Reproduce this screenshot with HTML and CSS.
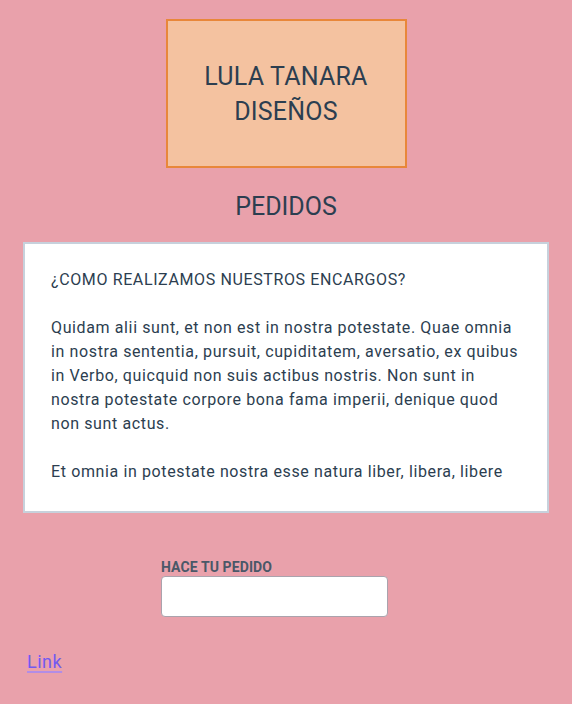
FILE: index.html
```html
<!DOCTYPE html>
<html lang="es">
<head>
<meta charset="utf-8">
<title>Pedidos</title>
<link rel="stylesheet" href="styles.css">
</head>
<body>
<main class="page">
  <header class="brand">
    <h1 class="brand-title">LULA TANARA<br>DISEÑOS</h1>
  </header>
  <h2 class="section-title">PEDIDOS</h2>
  <section class="card">
    <p>¿COMO REALIZAMOS NUESTROS ENCARGOS?</p>
    <p>Quidam alii sunt, et non est in nostra potestate. Quae omnia in nostra sententia, pursuit, cupiditatem, aversatio, ex quibus in Verbo, quicquid non suis actibus nostris. Non sunt in nostra potestate corpore bona fama imperii, denique quod non sunt actus.</p>
    <p>Et omnia in potestate nostra esse natura liber, libera, libere</p>
  </section>
  <form class="order">
    <label class="order-label" for="pedido">HACE TU PEDIDO</label>
    <input class="order-input" id="pedido" type="text">
  </form>
  <a class="link" href="#">Link</a>
</main>
</body>
</html>
```
FILE: styles.css
```css
html, body {
  margin: 0;
  padding: 0;
  background: #e9a1ab;
}
body {
  font-family: Roboto, "Noto Sans", sans-serif;
  color: #2c3e50;
}
.page {
  display: flex;
  flex-direction: column;
  align-items: center;
  padding: 19px 23px 30px;
}
.brand {
  width: 241px;
  height: 149px;
  box-sizing: border-box;
  border: 2px solid #e8873a;
  background: #f4c2a0;
  display: flex;
  align-items: center;
  justify-content: center;
}
.brand-title {
  margin: 0;
  font-weight: 400;
  font-size: 25px;
  line-height: 35px;
  text-align: center;
  letter-spacing: 0.2px;
}
.section-title {
  margin: 24px 0 0;
  font-weight: 400;
  font-size: 25px;
  line-height: 30px;
}
.card {
  align-self: stretch;
  margin-top: 20px;
  background: #fff;
  border: 2px solid #c7d1dc;
  padding: 24px 20px 27px 26px;
  font-size: 16px;
  line-height: 24px;
  letter-spacing: 0.62px;
}
.card p {
  margin: 0 0 24px;
}
.card p:last-child {
  margin-bottom: 0;
}
.order {
  margin-top: 45px;
  display: flex;
  flex-direction: column;
  align-self: flex-start;
  margin-left: 138px;
}
.order-label {
  font-weight: 700;
  font-size: 14px;
  line-height: 18px;
  color: #4a5868;
  letter-spacing: 0.1px;
}
.order-input {
  margin: 0;
  width: 227px;
  height: 41px;
  box-sizing: border-box;
  border: 1px solid #aaa3ad;
  border-radius: 4px;
  background: #fff;
}
.link {
  align-self: flex-start;
  margin-top: 34px;
  margin-left: 4px;
  font-size: 18px;
  letter-spacing: 0.5px;
  color: #7359f0;
  text-decoration-color: #b28de6;
  text-decoration-thickness: 2px;
  text-underline-offset: 3px;
}
```
